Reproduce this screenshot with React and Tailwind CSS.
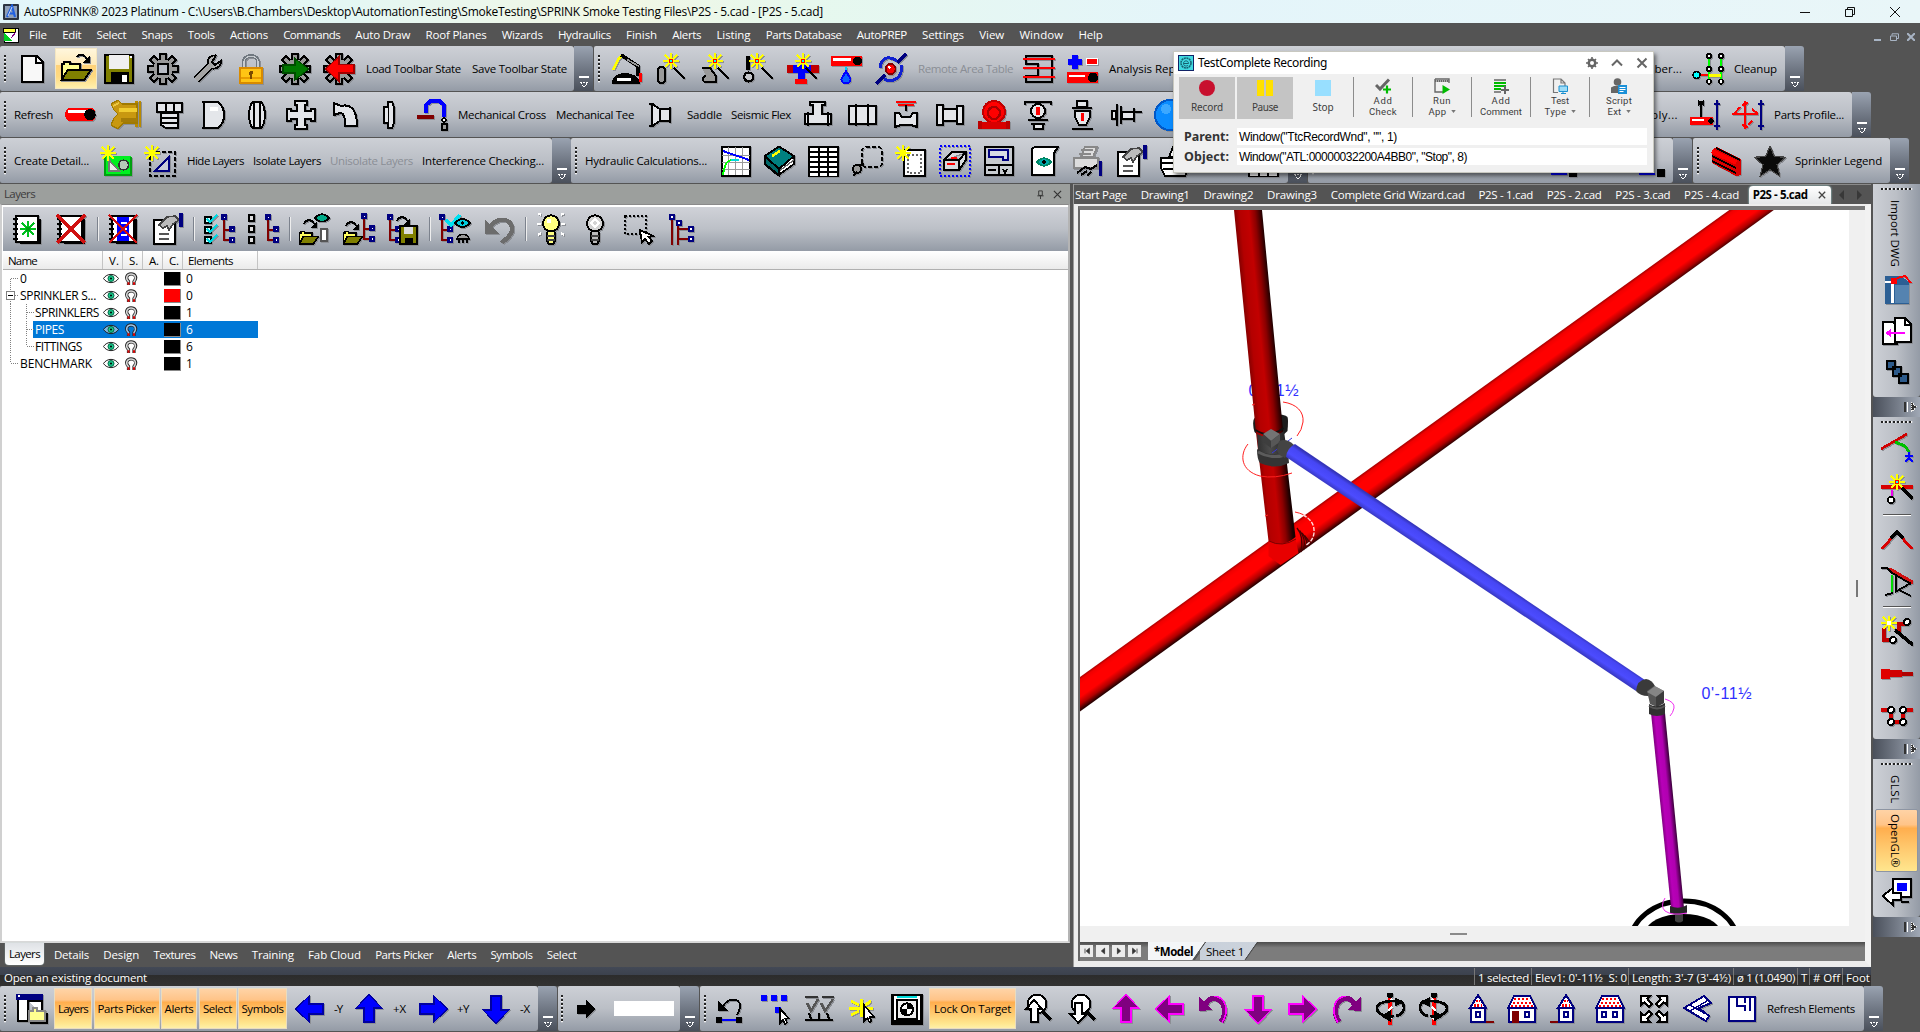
import React, { useLayoutEffect, useRef, useState } from "react";

const k = "#000", w = "#fff", r = "#f00", b = "#00f", n = "#000080", m = "#800000", y = "#ffff00", g = "#9a9a9a", ol = "#808000";

const p = (d, s = k, f = "none", sw = 1) => <path d={d} stroke={s} fill={f} strokeWidth={sw} />;
const c = (x, yy, rad, s = k, f = "none", sw = 1) => <circle cx={x} cy={yy} r={rad} stroke={s} fill={f} strokeWidth={sw} />;
const rc = (x, yy, ww, h, f = k) => <rect x={x} y={yy} width={ww} height={h} fill={f} />;

const spark = (x, yy, col = y, core = r) => (
  <g transform={`translate(${x} ${yy})`}>
    {p("M0-4V4M-4 0H4M-3-3L3 3M3-3L-3 3", col, "none", 0.9)}
    {rc(-1.2, -1.2, 2.4, 2.4, core)}
    {core === r && rc(-0.5, -0.5, 1, 1, "#0ff")}
  </g>
);
const gear = (
  <>
    {p("M8 0v16M0 8h16M2.2 2.2l11.6 11.6M13.8 2.2L2.2 13.8", k, "none", 3.6)}
    {c(8, 8, 5, k, g)}
    {p("M8 .8v14.4M.8 8h14.4M2.9 2.9l10.2 10.2M13.1 2.9L2.9 13.1", g, "none", 1.9)}
    {c(8, 8, 4.4, g, g)}
  </>
);
const wand = p("M9.5 7.5l5.5 5.5", k, "none", 1.4);
const tree = (x = 0, yy = 0) => (
  <g transform={`translate(${x} ${yy})`}>
    {p("M1.5 3v10.5h3M1.5 8.5h3", m)}
    {p("M.7 1.2h1.8v1.8H.7zM4.7 7.2h1.8V9H4.7zM4.7 12.5h1.8v1.8H4.7z", n, w, 1.1)}
  </g>
);
const book = (
  <>
    {p("M2.5 1.5h11v13h-11z", k, w)}
    {p("M4.5 15.2H14.6V3", k)}
    {p("M1 3h2.5M1 5.5h2.5M1 8h2.5M1 10.5h2.5M1 13h2.5", k)}
  </>
);
const folder = (x, yy) => (
  <g transform={`translate(${x} ${yy}) scale(.62)`}>
    {p("M.5 14V5.5h1v-1h3v1h6V9", k, "#ffff60", 1.4)}
    {p("M.5 14.5l3-6h12l-4 6z", k, ol, 1.4)}
  </g>
);
const hop = (x, yy) => <g transform={`translate(${x} ${yy})`}>{p("M0 2.5c1-2.5 4-2.5 5 0")}{p("M6.5 1v3.5H3.2z", "none", k)}</g>;
const house = (door, wide) => (
  <>
    {wide ? p("M1 7.5L4 1.5h8L15 7.5z", n, "#fff") : p("M4 7.5L8 1l4 6.5z", n, "#fff")}
    {wide ? <path d="M4 3h8M3.5 5h9M2.500 6.500h11" stroke={r} strokeDasharray="1 1" strokeWidth="1.200" /> : <path d="M7 4h2M6 6.200h4" stroke={r} strokeDasharray="1 .7" strokeWidth="1.200" />}
    {wide ? p("M1.5 7.5h13v7h-13z", n, w) : p("M4.5 7.5h7v7h-7z", n, w)}
    {wide ? p("M9.5 9.5h2v2.5h-2z", n, w) : p("M7 9.5h2v2.5H7z", n, w)}
    {door === "in" && rc(3, 9, 3.5, 6, m)}
    {door === "two" && p("M4 9.5h2v2.5H4z", n, w)}
    {door === "r" && rc(12, 13.8, 4, 1.4, m)}
    {door === "l" && rc(0, 13.8, 4, 1.4, m)}
  </>
);
const arrowU = (f, s) => p("M8 .8L14.5 7.5H10.5V14.5H5.5V7.5H1.5z", s, f, 0.6);
const rot = (deg, el) => <g transform={`rotate(${deg} 8 8)`}>{el}</g>;
const bend = (
  <>
    {p("M4.5 14.5C1 9.5 3 2.8 8.2 2.8 11 2.8 12 5 12.5 7", "#800080", "none", 2.6)}
    {p("M4 14.8C.2 9 2 1.6 8.2 1.6", "#f0f", "none", 0.8)}
    {p("M8.5 8.5l6.8.5V2z", "none", "#800080")}
  </>
);
const orbit = (
  <>
    {p("M8 0v16", r, "none", 2.4)}
    {p("M9 3L7 5M9 7L7 9M9 12l-2 2", w, "none", 1)}
    {c(8, 1, 1.6, "none", k)}
    {p("M14 4.5C7 3 1 5 1.5 8S7 12 10 11.5", k, "none", 1.4)}
    {p("M14 4.5c2 3 1 6-3 7", k, "none", 1.3)}
    {p("M10.5 2.5v4l4-2zM8 9v5l-4-2.5z", k, k, 0.5)}
  </>
);
const shade = "#e4e6ea";

const icons = {
  new: <>{p("M2.5 1.5h7.5l3 3v10H2.5z", k, "#f8f8f8")}{p("M9.5 1.5v3.5h3.5")}</>,
  open: <>{p("M1 14V5.5h1v-1h3v1h5V8", k, "#ffff90")}{p("M.8 13.5l3-5h11.7l-3.5 5z", k, ol)}{p("M8.5 2C10 0 12 .5 13.5 3")}{p("M15 1.2v3.6h-3.6z", "none", k)}</>,
  save: <>{p("M1 .8h14.2v14.4H1z", k, ol)}{rc(3.2, 1, 9.6, 7, "#f0f0f0")}{rc(4, 9.5, 9, 5.6, k)}{rc(9.6, 10.8, 2.2, 3.6, w)}{rc(13.3, 1.5, 1.2, 1.2, w)}</>,
  gear: <>{gear}{p("M5.5 5.5h5v5h-5z", k, "#b8bcc4")}</>,
  wrench: <>{p("M2.5 13.5L10 6", k, "none", 4)}{p("M12.5 1.2C8 1 8 5 9 7c2 1.5 6 1 6-3.2L12 6 10.5 4.5z", k, "#b0b0b0", 0.9)}{p("M2.7 13.3L10.5 5.5", "#a4a4a4", "none", 2.4)}</>,
  lock: <>{p("M4.5 8V4.5C4.5.5 11.5.5 11.5 4.5V8", "#707880", "none", 2)}{p("M4.5 8V4.5C4.5.8 11.5.8 11.5 4.5V8", "#c8ccd0", "none", 0.7)}{p("M2.5 7.5h11v7.7h-11z", "#d88a00", "#ffc414")}{rc(3, 12, 10, 1.2, "#e89c00")}{c(8, 10, 1, "none", "#7a4a00")}{rc(7.6, 10, 0.9, 3, "#7a4a00")}</>,
  gearR: <>{gear}{p("M2 6h6V2.8L14.8 8 8 13.5V10H2z", "#004c00", "#007800", 0.6)}</>,
  gearL: <>{gear}{p("M15.5 5.8H8V1.8L1.2 8 8 14.2V10h7.5z", "#a00000", r, 0.6)}</>,
  hand: <>{p("M1 8.5L4 2.5 5.5 1.5", y, "none", 1.3)}{p("M5 1l8.5 5.5v5", k, "none", 1.8)}{p("M8 3.2l6 3.5", g, "none", 0.8)}{p("M1 15c0-6 12-6 13 0z", k, k)}{p("M3 13.2h7", w, "none", 1.5)}{rc(14, 10, 1.4, 4.5, r)}</>,
  wandO: <>{p("M1.5 8.5c0-2 3.5-2 3.5 0v5c0 2-3.5 2-3.5 0z", k, g)}{spark(8, 4)}{wand}</>,
  wandP: <>{p("M1.5 7.5h4l3 4v3h-5c-2 0-2-3 0-3", k, g)}{spark(8, 4)}{wand}</>,
  wandH: <>{p("M2.5 1.5v7", k, "none", 1.6)}{c(2.8, 12, 2.2, k, "#c4c6ca", 1.2)}{spark(7, 4)}{wand}</>,
  wandT: <>{rc(0, 6, 16, 3.8, "#c00000")}{rc(3, 6, 9, 3.8, b)}{rc(5.5, 8, 3.5, 5.5, b)}{rc(4, 13.2, 6, 2.4, r)}{spark(8, 4)}{wand}</>,
  drop: <>{rc(0, 1.5, 15.5, 5, r)}{rc(1, 2.7, 9, 1.2, w)}{c(13.2, 4, 2, k, k, 0.5)}{p("M7.5 7v3", "#00d0ff")}{p("M7.5 9l2.3 4c0 3-4.6 3-4.6 0z", b, "#0a60ff")}</>,
  orbit: <>{p("M15.5.5L11 5M5 11L.5 15.5", n, "none", 1.8)}{p("M2.5 7.500C3 1.5 8 1.500 11 4M13 6c1.500 7-5 9-8.500 7", "#1020d0", "none", 1.5)}{c(7.8, 8, 2.5, m, r)}{c(7.2, 7.2, 0.6, "none", w)}</>,
  sheet: <>{p("M1.5 1.5h13v13h-13v-3h6v-6h-6z", k, "none", 1.1)}{p("M0 3h16M0 7.5h16M0 12h16", r, "none", 0.9)}</>,
  diff: <>{p("M4 1v7M.5 4.5h7", b, "none", 2.6)}{rc(9.5, 2.5, 6, 3.4, w)}{rc(10, 3, 5, 2.4, r)}{rc(0, 9.5, 15.5, 5.5, r)}{rc(1, 10.8, 8, 1.2, w)}{c(13, 12.3, 2.2, k, k, 0.5)}</>,
  clean: <>{p("M8.5 1v14M14.5 1v14", "#0f0", "none", 1)}{p("M4 11h4", r)}{p("M8.5 11.2h6", y, "none", 1.3)}{c(2.3, 11, 1.7, k, "#0ff", 0.8)}{[1.5, 8, 14.3].map((v) => <React.Fragment key={v}>{c(8.5, v, 1.1, k, w, 0.8)}{c(14.5, v, 1.1, k, w, 0.8)}</React.Fragment>)}</>,
  pipe: <>{p("M2 4.5h11c3 0 3 6.5 0 6.5H2c-2.5 0-2.5-6.5 0-6.5z", "none", r)}{rc(1.5, 5.5, 9, 1.3, w)}{c(12.5, 7.8, 2.6, k, k, 0.5)}</>,
  brass: <>{p("M13.500 1v13M15.500 1v13", "#b88a00", "none", 1.500)}{p("M14 2.500H6.500L4.500.5 1 2.500l1.500 3 2 2-2 2L1 13l3.500 2 2.500-3h7z", "#a07a00", "#c89810", 0.6)}{p("M5 5.500h9", "#f0cc30", "none", 2.200)}{p("M6 10.500h8", "#a47c08", "none", 1.600)}{p("M2 3.500l3-1.500", "#ecc840")}</>,
  cap: <>{p("M2 2h12.5v4.5H2z", k, shade)}{p("M4 7h8.5v7.5h-6L4 13z", k, shade)}{p("M4 9.5h8M4 12h8M6.5 2v4M10.5 2v4")}</>,
  plug: <>{p("M3.5 1.5v13M3.5 1.5h7c4 3 4 10 0 13h-7M2.5 1.5h2M2.5 14.5h2", k, shade)}{p("M6.5 5h4", w, "none", 1.6)}</>,
  ring: <>{p("M6 1.5h4c2.5 2 2.5 11 0 13H6C3.500 12.5 3.500 3.5 6 1.5z", k, shade)}{p("M6.300 2v12M9.300 2v12")}</>,
  cross: <>{p("M5 .8h6v2.4H9.8v3H12.8V5H15.2v6H12.8V9.8H9.8v3H11v2.4H5v-2.4h1.2v-3h-3V11H.8V5h2.4v1.2h3v-3H5z", k, shade)}</>,
  elbow: <>{p("M2.5 2v6l3-1c2 0 2.5 2 2.5 6.5h6C14 7 12 2 6 3.5z", k, shade)}</>,
  ring2: <>{p("M9.5 1.5c1.500 2 1.500 11 0 13h-2v-13z", k, shade)}{p("M7.5 4H5.5v8h2", k, shade)}</>,
  loop: <>{p("M4.5 7V3l2-1.8h5L13.5 3v6", b, "none", 2)}{rc(0, 8, 8.5, 2, m)}{c(13.5, 10.5, 1, k, w, 0.7)}{p("M12.5 12.5h2.5v3h-2.5z", k, g)}</>,
  bell: <>{p("M3.5 2.5v11l4-2.500h5V5h-5z", k, shade)}{p("M2 2.5h2.5M2 13.5h2.5M7.5 5v6M12.5 4v8")}</>,
  tee: <>{p("M1.5 7.5h4V3H4V1.5h7.500V3H10v4.5h4.500v5h-13z", k, shade)}{p("M3 6.500v7M13 6.500v7")}</>,
  coup: <>{p("M1.5 3.500h13.5v9H1.5z", k, shade)}{p("M5 2.500v11M11 2.500v11")}</>,
  valve: <>{p("M3 1.5h10M4 3h8", r, "none", 1)}{p("M8 3v3")}{p("M2.5 14V7h2l1.5 2h4l1.5-2h2v7l-3-1H5.5z", k, shade)}</>,
  nip: <>{p("M1.5 3h3v2h7V3.5h3v9h-3V11h-7v2h-3z", k, shade)}{p("M4.5 5v6M11.5 5v6")}</>,
  flange: <>{c(8, 6.5, 5.5, "#c00000", r)}{c(8, 7, 3, "#a80000", "none", 1.2)}{rc(1, 11.5, 14, 3.5, "#d80000")}{rc(0, 11, 2, 4, "#b00")}{rc(14, 11, 2, 4, "#b00")}</>,
  head: <>{p("M1 1.5h14M1.5 2v1M14.5 2v1")}{c(8, 6, 3.5, k, shade)}{p("M8 4v4", r, "none", 1.6)}{p("M3 10.5h10M4.5 12.5h7M6 12v3h4.5v-3", k, shade)}</>,
  head2: <>{p("M5.5 1h5v3h-5zM3 4.5h10", k, shade)}{p("M4.5 6h7.5v3L10 13H6.5L4.5 9z", k, shade)}{p("M8.2 7v4", r, "none", 1.5)}{p("M3 15h10.5")}</>,
  side: <>{p("M3.5 2.5v11M5.5 3.5v9", k)}{p("M1 6h2v4H1zM6 6.5h6v3.5H6z", k, shade)}{p("M12 6.500h4M12 4.5v7")}</>,
  ball: <>{c(8, 8, 7.5, "#0058c8", "#0a8cff", 1)}{c(6, 5, 2.5, "none", "#3ca8ff")}</>,
  align: <>{p("M6.5 1v12", k, "none", 1.2)}{p("M5 1l3 2M8 1L5 3")}{rc(1, 9, 11.5, 4.2, r)}{rc(2, 10, 6, 1, w)}{c(11.5, 11, 1.4, "none", k)}{p("M14.5 .5v15M13 2.5h3M13 13.5h3", n, "none", 1.1)}</>,
  redarr: <>{p("M6.5 1v14M0 7.5h13M4 4l-3 3.5M10 5l3 2.5M5 3l3-1M5 13l3 1M8 13l2-2", r, "none", 1)}{p("M14.5 .5v15M13 2.5h3M13 13.5h3", n, "none", 1.1)}</>,
  detail: <>{rc(2, 5.5, 13.5, 10, "#00f020")}{p("M2.5 6v9h13V6", "#00a010")}{p("M4.5 7.5v5.5h5z", "#777", "#eee", 0.8)}{c(11.8, 10, 2.4, "#333", "#b8c8b8", 0.8)}{spark(4, 4, y, y)}</>,
  area: <><path d="M3 3.5h12.5v12H3z" stroke={k} strokeDasharray="2 1" fill="none" />{p("M5.5 13L12.5 6v7z", n, "#c8ccd8")}{spark(4, 4, y, y)}</>,
  graph: <>{p("M1.5 1h14v14.5h-14z", k, w)}{p("M4.5 1v14M8 1v14M11.5 1v14M1.5 5h14M1.5 8.5h14M1.5 12h14", g, "none", 0.5)}{p("M2 3l13 4.5", b)}{p("M2 15c1-6 2-7 4-7.5", "#0f0")}{p("M6 7.5h4", "#0dd")}</>,
  book2: <>{p("M.8 5.500v4L7.500 15.200 15.500 9.500V5.500z", k, w, 0.9)}{p("M7.500 13.500l8-6", "#666", "none", 0.7)}{p("M.8 5.500L8 .8l7.500 4.700L8 12z", k, "#008080")}{p("M.8 5.500L8 12v3L.8 9.500z", k, "#006868")}{p("M4.500 5.500L8.5 3", y, "none", 1.3)}</>,
  table: <>{rc(.5, .5, 15.5, 15.5, k)}{[1.5, 4, 6.5, 9, 11.5, 14].map((v) => <React.Fragment key={v}>{rc(1.5, v, 3.8, 1.4, w)}{rc(6.3, v, 3.8, 1.4, w)}{rc(11, v, 4, 1.4, w)}</React.Fragment>)}</>,
  lasso: <><rect x="5.5" y="1" width="10" height="10" rx="2" fill="none" stroke={k} strokeDasharray="2 1" />{c(3, 12, 2, k, g)}{p("M4 10l2.5-.5M1 15.5l2-2")}</>,
  newdoc: <>{p("M4.5 2.5h10.5v13H4.5z", k, w)}<path d="M6.5 5h6.5v9H6.5z" stroke="#666" strokeDasharray="1 1" fill="none" strokeWidth=".8" />{spark(4, 4, y, y)}</>,
  box3: <><rect x=".5" y=".5" width="15" height="15" stroke={b} strokeDasharray="1 1" fill="none" />{p("M2.5 7.5l4-4h7v4l-3.5 5H2.5zM2.5 7.5h7.5l3.5-4M10 7.5v5", k, "#d8dade")}{p("M6 6.500h3", r)}{rc(4, 9, 4, 1.2, r)}</>,
  titleb: <>{p("M.8 .8h14.4v14.4H.8zM.8 10h14.4M8 10v5", k, "#c8ccd0")}{p("M3 2.5h9.5v5H10V6H3z", n, "#d8dce4")}{p("M2.5 12.5h4M10 12l1 2 1-2", k)}</>,
  roll: <>{p("M2.5 15V3c0-2 1-2 2-2h11l-2 3v11z", k, w)}{p("M5 8.5c2-2.5 5-2.5 7 0-2 2.5-5 2.5-7 0z", "#086", "#0aa", 0.9)}{c(8.5, 8.5, 0.9, "none", k)}</>,
  print: <>{p("M5 6L7 1h6l-2 5zM1.5 6.5h12v5h-12z", "#888", "#ddd")}{p("M5 2.5h6M4 4.5h6", "#888", "none", 0.7)}{p("M3 14l4-3 3 1 3-2M5 15l3-2M8 15.5l2-2", k)}{rc(14, 8, 1.6, 7.5, n)}</>,
  props: <>{p("M1.5 3.5h10.5v12H1.5z", k, w)}{p("M4 6l4-4 4-.5 2 2-3 2-2 3-1-2-2 1z", "#444", "#bbb", 0.8)}{rc(14.2, 0, 1.6, 7, n)}{p("M4 10.5h5M4 13h5", "#555", "none", 0.8)}</>,
  prn: <>{p("M5 6L7 1h7l-2 5zM1 6.5h14v5l-2 4H3l-2-4z", k, w)}{p("M1 9h14M2 12h12")}</>,
  beam: <>{p("M1 2.5L3.5 1 15.5 7v8L13 15.5 1 9z", "none", "#d80000")}{p("M1 5.5l12 6M3 1.5l12 6M1 8l12 6", k, "none", 1)}{p("M1 3l12 5.8", r, "none", 2.2)}</>,
  star: p("M8 .5l2.2 5.3 5.6.3-4.3 3.8 1.4 5.7L8 12.3l-4.9 3.3 1.4-5.7L.2 6.1l5.6-.3z", "#444", "#0a0a0a", 0.6),
  lnew: <>{book}{spark(8.5, 8, "#00c020", "#00a010")}</>,
  ldel: <>{book}{p("M1 1l14 14M15 1L1 15", "#d01010", "none", 1.5)}</>,
  lmv: <>{book}{rc(5, 2, 6, 12, b)}{p("M7 5h3M7 8h3M7 11h3", w, "none", 0.8)}{p("M1 1l14 14M15 1L1 15", "#d01010", "none", 1.3)}</>,
  ltree1: <>{p("M1 2h3v3H1zM1 7h3v3H1zM1 12h3v3H1z", k, "#cff")}{p("M2 3l1.5 1.5L7 1M2 8l1.5 1.5L7 6M2 13l1.5 1.5L7 11", "#00d8e0", "none", 1.1)}{tree(9, 0)}</>,
  ltree2: <>{p("M1 1h2.5v3H1zM1 6.5h2.5v3H1zM1 12h2.5v3H1z", k, "#ddd")}{tree(9, 0)}</>,
  lopen1: <>{folder(0, 6.5)}{hop(2.5, 3)}{p("M8 2.5c2-2.5 5-2.5 7 0-2 2.5-5 2.5-7 0z", k, "#0a8", 0.8)}{p("M11 8h3v6h-3z", "#555", w)}</>,
  lopen2: <>{folder(0, 6.5)}{hop(1.5, 4)}{tree(9, -.5)}</>,
  lsave: <>{tree(0, 0)}{hop(5, 1.5)}{p("M6.5 6.5h8.5v9H6.5z", k, ol)}{rc(8.5, 7, 4.5, 3.4, "#ddd")}{rc(9, 12.5, 4, 3, k)}</>,
  lchk: <>{tree(0, 0)}{p("M3.5 3.5L6 6l4.5-5", "#00e0f0", "none", 1.8)}{p("M8 5c2-2.500 5.500-2.500 7.500 0-2 2.500-5.500 2.500-7.500 0z", k, "#0cd")}{c(11.800, 5, .8, "none", k)}{p("M9 13c0-3 6-3 6 0zM10 13v2M14 13v2M12 13v2", k, g, 0.8)}</>,
  undo: <>{p("M3 8C6 1.5 15 2 14.5 8.5 14 12 11 13 9.5 15", "#6c6c6c", "none", 2.2)}{p("M1 3.5v7h7z", "none", "#6c6c6c")}</>,
  bulbOn: <>{p("M3 1L1.5 0M13 1l1.5-1M1 5.5H3M13 5.5h2M3 10l-1.5 1M13 10l1.5 1", w)}{c(8, 5.2, 4, k, "#ffff80")}{p("M6 9.5v4.5l1 1.5h2l1-1.5V9.5", k, "#ffff80")}{p("M6 11.5h4M6 13.5h4", "#444")}{c(7, 4, 1.2, "none", w)}</>,
  bulbOff: <>{c(8, 5.2, 4, k, "#d4d4d4")}{p("M6 9.5v4.5l1 1.5h2l1-1.5V9.5", k, "#bbb")}{p("M6 11.5h4M6 13.5h4", "#444")}{p("M6 5l2-2 2 2-2 2z", w, "none", 0.8)}</>,
  lsel: <><rect x="1" y="1.5" width="10.5" height="9" stroke={k} strokeDasharray="1 1" fill="none" />{p("M8.5 8.5l1 6 1.5-1.5 2 2.5 1.5-1.5-1.5-2 2-.5z", k, w, 0.9)}</>,
  lall: <>{p("M2.5 2v14M5.5 4v12M5.5 8h5M5.5 13h5", m)}{p("M1.5 1.2h1.8V3H1.5zM5 4h1.8v1.8H5zM11 7.2h1.8V9H11zM11 12.2h1.8V14H11z", n, w)}</>,
  wins: <>{p("M.8 3v11h5V3z", k, w)}{rc(0, .5, 13.5, 3, n)}{rc(1, 1.2, 1, 1, w)}{p("M6 4h7v7", k, w)}{p("M6.5 14V9h2V7.5h2V9h4v5z", "#888", "#ffff90", 0.8)}{p("M7 15.2h8.5V10", k)}</>,
  aL: rot(-90, arrowU("#00f", "#0000a0")), aU: arrowU("#00f", "#0000a0"), aR: rot(90, arrowU("#00f", "#0000a0")), aD: rot(180, arrowU("#00f", "#0000a0")),
  go: p("M3.5 6h4.5V3.5L12.5 8 8 12.5V10H3.5z", k, k, 0.5),
  lastv: <>{p("M4 6.5C7 2 12.5 2.5 12.5 6.5c0 2.5-1 3.5-1.5 4.5", k)}{p("M1.5 4v4.8h4.8z", "none", k)}{rc(.5, 12, 2.8, 3, k)}{rc(10.5, 12, 2.8, 3, k)}{p("M3.5 13.5h7", b)}</>,
  selb: <>{rc(1, 1, 3.2, 3.2, b)}{rc(6, 1, 3.2, 3.2, b)}{rc(11, 1, 3.2, 3.2, b)}{rc(8, 7, 3, 3, b)}{p("M10.5 8v7l1.5-1.5 1 2 1-.7-.8-2h2z", k, w, 0.8)}</>,
  chk2: <>{p("M1 2h6.5M9.5 2H15.500", "#333")}{p("M2 5l2 4L7.5 3M9 5l2 4 4-6", "#555", "none", 1.2)}{p("M1 13.5h14", k, "none", 1.2)}{p("M3 10l1 3M8 10v3M12 10l1 3")}</>,
  ypt: <>{p("M2 4l4 2M1 7.5h12M2 11l4-2M7 3v9M12 4L8 7M12 11L8 8", y, "none", 1.5)}{p("M8.5 6v8l1.7-1.6 1 2.3 1-.6-.9-2.1h2.2z", k, w, 0.8)}</>,
  target: <>{p("M.8 1h14.4v14.2H.8z", k, w, 1.2)}{rc(3, 1.5, 10, 1.2, "#0dd")}{p("M3 3.5h10V13H3z", k, "#eee")}{c(8, 8.2, 3, k, w)}{p("M8 5.2v3H11A3 3 0 0 0 8 5.2zM8 8.2v3A3 3 0 0 1 5 8.2z", "none", k)}{p("M1 14h14")}</>,
  zin: <>{c(7.5, 5.5, 4.7, k, w)}{p("M10.5 9.5l4 4", k, "none", 1.8)}{p("M6 3.5L10 8H8v6.5H4.5V8H2z", k, w)}</>,
  zout: <>{c(7.5, 5.5, 4.7, k, w)}{p("M10.5 9.5l4 4", k, "none", 1.8)}{p("M6.2 15L2 10.5h2.3V5h3.7v5.5h2.3z", k, w)}</>,
  pU: arrowU("#800080", "#f0f"), pL: rot(-90, arrowU("#800080", "#f0f")), pD: rot(180, arrowU("#800080", "#f0f")), pR: rot(90, arrowU("#800080", "#f0f")),
  bendL: <g transform="translate(16 0) scale(-1 1)">{bend}</g>, bendR: bend,
  orbL: orbit,
  orbR: <g transform="translate(16 0) scale(-1 1)">{orbit}</g>,
  h1: house("r", false), h2: house("in", true), h3: house("l", false), h4: house("two", true),
  fit: <>{[0, 90, 180, 270].map((a) => <g key={a} transform={`rotate(${a} 8 8)`}>{p("M1.5 1.5h4.5L4.7 3l2.3 2.6-1.6 1.5L3 4.7 1.5 6z", k, w, 1)}</g>)}</>,
  iso: <>{p("M1 7.5L11 1.5l1.5 1.5 2 2-6 2.5 5 4-1.5 2.5z", n, w)}{p("M4 9l8.5-5M8 7.5l6 4.5M4 6l7 4", n, "none", 0.7)}</>,
  plan: <>{p("M1.5 2h13v12h-13z", n, w, 1.1)}{p("M5.5 2v4.5h4V9M9.5 2v3M12 2v7", n)}</>,
  dwg: <>{p("M2 1.5h8l4 3v10.8H2z", "none", "#2c5f94")}{rc(7, 6, 7, 9, "#5583b0")}{p("M5.8 3v12M2 4.5h6", w, "none", 1.2)}{rc(5, 2.5, 3, 3.2, r)}{p("M8 2.5L12 1.5 15 5", r, "none", 1)}</>,
  copy: <>{p("M.8 3.5h5l2 2v9h-7z", k, w)}{p("M7 1.5h5l3 3v9H7z", k, w)}{p("M12 1.5V5h3")}{p("M3 9h9", "#f0f")}{p("M2 9l3-2v4z", "none", "#f0f")}</>,
  cubes: <>{p("M3 2h4v4H3zM6 5.2h4.2v4.2H6zM9 8.6h4.3v4.6H9z", k, "#2d5a8a", 1)}</>,
  r1: <>{p("M0 8.5L13 1", "#d00000", "none", 1.3)}{p("M7 5l5 2 2 3v1", "#00c000", "none", 1.4)}{p("M12 12h4M14 10v4M12 15l2-2 2 2", b)}</>,
  r2: <>{rc(0, 5.5, 16, 2, "#d80000")}{spark(8, 4)}{p("M5.5 8v3", "#e0e", "none", 1.3)}{c(5, 13, 1.6, k, w)}{p("M10.5 7l5.5 5.5", k, "none", 1.6)}</>,
  r3: <>{p("M.5 12.5L8 4l7.5 8.5", "#d80000", "none", 1.4)}{p("M5 7.2L8 3.8l3 3.4", k, "none", 1.7)}</>,
  r4: <>{p("M4 1.500l12 7", "#d01010", "none", 2)}{p("M0 1h3l3 3M4 2.500l11 6.500", k, "none", 0.9)}{p("M5.500 4.500v9", "#0d0", "none", 1.4)}{p("M7.500 5v8M7 13l8-4.500M2 14.500l4-1M9 12l6 3", k, "none", 0.9)}</>,
  r5: <>{p("M1.5 6v6h4M9 8V4h3", "#c00000", "none", 1.8)}{c(6, 12, 1.5, k, w)}{c(13, 3, 1.5, k, w)}{p("M7 7l9 7.5", k, "none", 1.8)}{spark(4, 3.5, y, w)}</>,
  r6: <>{p("M0 5.5h4.5v5H0z", "none", "#e00000")}{rc(4.5, 6.2, 6, 3.4, "#d00000")}{rc(10.5, 7.2, 5.5, 1.8, "#b00000")}</>,
  r7: <>{p("M0 5h5M11 5h5M5 5v6h6V5", "#d00000", "none", 1.6)}{c(5, 5, 1.5, k, w)}{c(11, 5, 1.5, k, w)}{c(5, 11, 1.5, k, w)}{c(11, 11, 1.5, k, w)}</>,
  back: <>{p("M6 1h9v9H6z", k, w, 1.2)}{rc(8, 3, 5, 4, b)}{p("M.8 9.5L6 5.5V8h4v3.5H6V14z", k, w)}{p("M10 12.5h4")}</>,
  net: <>{p("M2 14.5h8", b)}{rc(11, 12, 4, 4, k)}</>,
  blank: null,
};

function Icon({ i, className = "size-8" }) {
  return (
    <svg viewBox="0 0 16 16" shapeRendering="crispEdges" className={`${className} shrink-0 drop-shadow-[1px_1px_0_#8c8f95]`}>
      {icons[i]}
    </svg>
  );
}

/* Text whose letter spacing is tuned so that it fills a given width. */
function T({ w: width, className = "", children }) {
  const ref = useRef(null);
  const [ls, setLs] = useState(0);
  useLayoutEffect(() => {
    const natural = ref.current.getBoundingClientRect().width;
    setLs((width - natural) / String(children).length);
  }, [width, children]);
  return (
    <span ref={ref} className={`inline-block shrink-0 whitespace-nowrap ${className}`} style={{ letterSpacing: ls }}>
      {children}
    </span>
  );
}

const Cell = ({ i }) => <div className="flex w-11 shrink-0 items-center justify-center"><Icon i={i} /></div>;
const Cells = ({ list }) => list.split(" ").map((i, x) => <Cell key={x} i={i} />);
const Label = ({ w: width, dim, pad = "pl-[5px] pr-1", children }) => (
  <div className={`flex shrink-0 items-center ${pad} ${dim ? "text-[#8a8e95]" : "text-black"}`}><T w={width}>{children}</T></div>
);
const Grip = ({ className = "w-[11px] pl-1" }) => (
  <div className={`flex shrink-0 items-center ${className}`}>
    <div className="h-7 w-[2px] bg-[repeating-linear-gradient(#222_0_2px,#f4f4f4_2px_3px,#b8bcc4_3px_4px)]" />
  </div>
);
const Bar = ({ className = "", children }) => (
  <div className={`flex h-[45px] min-w-0 ${className}`}>
    <div className="flex min-w-0 flex-1 items-stretch overflow-hidden rounded-r-[3px] rounded-l-[2px] bg-linear-to-b from-[#cdd0d6] via-[#bbbfc6] to-[#949ba6]">{children}</div>
    <div className="flex w-[19px] shrink-0 flex-col items-center justify-end rounded-tr-[3px] bg-linear-to-b from-[#9aa3b1] to-[#4a505b] pb-[2px]">
      <svg viewBox="0 0 12 14" className="h-[14px] w-3" shapeRendering="crispEdges">
        <path d="M1 1.5h10" stroke="#fff" strokeWidth="2" />
        <path d="M2 7h8l-4 5z" fill="#555b66" stroke="#fff" strokeDasharray="2 1" />
      </svg>
    </div>
  </div>
);
const Toggle = ({ w: width, tw, children }) => (
  <div className={`my-[2px] flex shrink-0 items-center justify-center border border-[#e9dcc0] bg-[linear-gradient(#ffd3a6,#ffc488_28%,#ffae4e_34%,#ffc76c_60%,#ffe68e_88%,#fff0a8)] text-black ${width}`}><T w={tw}>{children}</T></div>
);

const menus = [["File", 18], ["Edit", 19], ["Select", 30], ["Snaps", 31], ["Tools", 27], ["Actions", 38], ["Commands", 57], ["Auto Draw", 55], ["Roof Planes", 61], ["Wizards", 41], ["Hydraulics", 53], ["Finish", 31], ["Alerts", 29], ["Listing", 34], ["Parts Database", 76], ["AutoPREP", 50], ["Settings", 42], ["View", 25], ["Window", 44], ["Help", 24]];

function TopBars() {
  return (
    <div className="flex h-[138px] shrink-0 flex-col gap-px">
      <div className="flex w-[1804px]">
        <Bar className="w-[594px] pr-px">
          <Grip />
          <Cell i="new" />
          <div className="my-[2px] flex w-[42px] shrink-0 items-center justify-center border border-[#f3e6c2] bg-[linear-gradient(#fff6dc,#ffeab8_40%,#ffd27a_42%,#ffda80_70%,#fff0ae)]"><Icon i="open" /></div>
          <Cells list="save gear wrench lock gearR gearL" />
          <Label w={95} pad="pl-[5px] pr-[6px]">Load Toolbar State</Label>
          <Label w={95}>Save Toolbar State</Label>
        </Bar>
        <Bar className="flex-1">
          <Grip />
          <Cells list="hand wandO wandP wandH wandT drop orbit" />
          <Label w={95} dim>Remote Area Table</Label>
          <Cells list="sheet diff" />
          <Label w={82} pad="pl-1 pr-2">Analysis Report</Label>
          <div className="flex-1" />
          <Label w={66}>Renumber...</Label>
          <Cell i="clean" />
          <Label w={43} pad="pl-1 pr-2">Cleanup</Label>
        </Bar>
      </div>
      <Bar className="w-[1871px]">
        <Grip />
        <Label w={39} pad="pl-[3px] pr-[6px]">Refresh</Label>
        <Cells list="pipe brass cap plug ring cross elbow ring2 loop" />
        <Label w={88} pad="pl-[3px] pr-[6px]">Mechanical Cross</Label>
        <Label w={78} pad="pl-1 pr-[5px]">Mechanical Tee</Label>
        <Cell i="bell" />
        <Label w={35} pad="pl-1 pr-[5px]">Saddle</Label>
        <Label w={60} pad="pl-1 pr-[5px]">Seismic Flex</Label>
        <Cells list="tee coup valve nip flange head head2 side ball" />
        <div className="flex-1" />
        <Label w={64}>Assembly...</Label>
        <Cells list="align redarr" />
        <Label w={70} pad="pl-1 pr-2">Parts Profile...</Label>
      </Bar>
      <div className="flex w-[1909px]">
        <Bar className="w-[571px]">
          <Grip />
          <Label w={75} pad="pl-[3px] pr-[5px]">Create Detail...</Label>
          <Cells list="detail area" />
          <Label w={57}>Hide Layers</Label>
          <Label w={68}>Isolate Layers</Label>
          <Label w={83} dim>Unisolate Layers</Label>
          <Label w={122}>Interference Checking...</Label>
        </Bar>
        <Bar className="w-[737px] pr-px">
          <Grip />
          <Label w={122} pad="pl-[3px] pr-[6px]">Hydraulic Calculations...</Label>
          <Cells list="graph book2 table lasso newdoc box3 titleb roll print props prn blank table" />
        </Bar>
        <Bar className="w-[385px] pr-px">
          <Grip />
          <Cells list="r7" />
          <div className="flex-1" />
          <Cells list="net blank net" />
        </Bar>
        <Bar className="flex-1">
          <Grip />
          <Cells list="beam star" />
          <Label w={87} pad="pl-[3px] pr-2">Sprinkler Legend</Label>
        </Bar>
      </div>
    </div>
  );
}

const rowsData = [
  ["0", 0, "#000", "0", 6], ["SPRINKLER S...", 0, "#f00", "0", 76], ["SPRINKLERS", 1, "#000", "1", 64],
  ["PIPES", 1, "#000", "6", 29], ["FITTINGS", 1, "#000", "6", 47], ["BENCHMARK", 0, "#000", "1", 72],
];
const treeLines = ["M7.5 9v8M8 8.5h7", "M7.5 0v17M12 8.5h4", "M7.5 0v17M22.5 0v17M23 8.5h7", "M7.5 0v17M22.5 0v17M23 8.5h7", "M7.5 0v17M22.5 0v8M23 8.5h7", "M7.5 0v8M8 8.5h7"];

function LayersPanel() {
  const sep = <div className="flex w-2 shrink-0 justify-center py-2.5"><div className="w-px bg-[#7c828d] shadow-[1px_0_0_#eee]" /></div>;
  return (
    <div className="flex w-[1070px] shrink-0 flex-col">
      <div className="flex h-5 items-center justify-between bg-[#9c9f9d] pr-2 pl-1 text-[#3c3c3c]">
        <T w={31}>Layers</T>
        <div className="flex gap-2">
          <svg viewBox="0 0 10 10" className="size-[9px]"><path d="M3 1h4v5H3zM1.500 6.500h7M5 6.500V10" fill="none" stroke="#333" /></svg>
          <svg viewBox="0 0 10 10" className="size-[9px]"><path d="M1 1l8 8M9 1L1 9" stroke="#333" strokeWidth="1.300" /></svg>
        </div>
      </div>
      <div className="flex h-[739px] flex-col border-t border-r-2 border-b-2 border-l-2 border-t-[#8a8a8a] border-r-[#b4b4b4] border-b-[#d8d8d8] border-l-[#d0d0d0] bg-white pt-[2px] pl-px">
        <div className="flex h-11 shrink-0 bg-linear-to-b from-[#d0d2d8] via-[#bcc0c7] to-[#949ba6] pl-[2px]">
          <Cells list="lnew ldel" />{sep}<Cells list="lmv props" />{sep}<Cells list="ltree1 ltree2" />{sep}
          <Cells list="lopen1 lopen2 lsave" />{sep}<Cells list="lchk undo" />{sep}<Cells list="bulbOn bulbOff lsel lall" />
        </div>
        <div className="flex h-[19px] shrink-0 items-center border-b border-[#b0b0b0] bg-linear-to-b from-white to-[#ebebeb] text-black">
          {[["Name", 29, "w-[100px] pl-[5px]"], ["V.", 10, "w-5 pl-1.5"], ["S.", 9, "w-5 pl-1.5"], ["A.", 10, "w-5 pl-1.5"], ["C.", 10, "w-5 pl-1.5"], ["Elements", 45, "w-[75px] pl-[5px]"]].map(([t, tw, cl]) => (
            <div key={t} className={`h-full shrink-0 border-r border-[#c4c4c4] leading-[20px] ${cl}`}><T w={tw}>{t}</T></div>
          ))}
        </div>
        <div className="w-[255px]">
          {rowsData.map(([name, lvl, col, count, tw], idx) => {
            const sel = name === "PIPES";
            return (
              <div key={name} className={`grid h-[17px] grid-cols-[100px_20px_20px_20px_20px_75px] items-center text-[12px] leading-[17px] ${sel ? "bg-[linear-gradient(90deg,#fff_30px,#0078d7_30px)] text-white" : "text-black"}`}>
                <div className="flex items-center">
                  <svg viewBox="0 0 31 17" className={lvl ? "h-[17px] w-8 shrink-0" : "h-[17px] w-[17px] shrink-0"} preserveAspectRatio="xMinYMin slice" shapeRendering="crispEdges">
                    <path d={treeLines[idx]} stroke="#808080" strokeDasharray="1 1" />
                    {idx === 1 && <><rect x="3.500" y="4.500" width="8" height="8" fill="#fff" stroke="#808080" /><path d="M5 8.500h5" stroke="#000" /></>}
                  </svg>
                  <T w={tw}>{name}</T>
                </div>
                <svg viewBox="0 0 16 10" className="h-[11px] w-4"><path d="M.5 5C4-.5 12-.5 15.500 5 12 10.500 4 10.500.5 5z" fill={sel ? "#7fb4e0" : "#fff"} stroke="#222" /><circle cx="8" cy="5" r="3" fill="#19c98a" stroke="#064" /><circle cx="8" cy="5" r="1" /></svg>
                <svg viewBox="0 0 14 14" className="ml-px h-[14px] w-[14px]"><path d="M4.500 13V9.500C1 6 3 1.800 7 1.800s6.500 3.700 3 7.700V13" fill="none" stroke="#222" strokeWidth="3.200" /><path d="M4.500 12.500V9.500C1 6 3 2 7 2s6 3.500 3 7.500v3" fill="none" stroke={sel ? "#9cc4e8" : "#d8d8d8"} strokeWidth="1.500" /><path d="M3.500 11.500h2M9 11.500h2" stroke="#d00" strokeWidth="2.400" /></svg>
                <span />
                <div className="ml-px h-[14px] w-[17px] border-r border-b border-[#888]"><div className={`h-full w-full ${col === "#000" ? "bg-black" : "bg-[#f00]"}`} /></div>
                <span className="pl-[3px] tracking-tight">{count}</span>
              </div>
            );
          })}
        </div>
      </div>
      <div className="flex h-6 items-start pl-[5px] text-white">
        <div className="mr-[10px] flex h-[22px] w-[39px] items-center justify-center rounded-b-[4px] bg-linear-to-b from-[#dfe2e6] to-white text-black shadow-[0_0_1px_#cff]"><T w={31}>Layers</T></div>
        <div className="flex gap-[14.200px] pt-1">
          {[["Details", 35], ["Design", 36], ["Textures", 42], ["News", 28], ["Training", 42], ["Fab Cloud", 53], ["Parts Picker", 58], ["Alerts", 29], ["Symbols", 42], ["Select", 30]].map(([t, tw]) => <T key={t} w={tw}>{t}</T>)}
        </div>
      </div>
    </div>
  );
}

function Model() {
  const G = ({ id, pts, stops }) => (
    <linearGradient id={id} gradientUnits="userSpaceOnUse" x1={pts[0]} y1={pts[1]} x2={pts[2]} y2={pts[3]}>
      {stops.map(([o, col]) => <stop key={o} offset={o} stopColor={col} />)}
    </linearGradient>
  );
  return (
    <svg viewBox="1080 210 769 716" className="h-[716px] w-[769px] bg-white">
      <defs>
        <G id="main" pts={[1430, 425, 1446.1, 447.4]} stops={[[0, "#a00000"], [0.1, "#f00000"], [0.25, "#ff0000"], [0.6, "#ff0000"], [0.82, "#b00000"], [1, "#2a0000"]]} />
        <G id="riser" pts={[1255.7, 430, 1283, 427.400]} stops={[[0, "#8a0000"], [0.18, "#b40000"], [0.5, "#c20000"], [0.72, "#8c0000"], [1, "#1a0000"]]} />
        <G id="blue" pts={[1445, 545.5, 1436, 559]} stops={[[0, "#3434b8"], [0.2, "#4646f4"], [0.6, "#4c4cff"], [1, "#3232b0"]]} />
        <G id="drop" pts={[1661, 811, 1675, 809.6]} stops={[[0, "#820082"], [0.25, "#b800b8"], [0.6, "#b000b0"], [1, "#2c002c"]]} />
        <G id="gray" pts={[1255, 440, 1290, 437]} stops={[[0, "#2c2c2c"], [0.4, "#4c4c4c"], [1, "#181818"]]} />
      </defs>
      <g fontFamily="Liberation Sans, sans-serif" fontSize="16" fill="#3030ff">
        <text x="1248.500" y="396" textLength="50">0'-11½</text>
        <text x="1701.500" y="699" textLength="50">0'-11½</text>
      </g>
      <path d="M1080 677L1430 425 1730 209.500H1774.500L1430 459 1080 711.500z" fill="url(#main)" />
      <path d="M1253.500 420q2-6 17-6t17 3q1 2 0 14-7 8-17 8t-16-7q-2-6-1-12z" fill="#1c1c1c" />
      <path d="M1234 210L1255.700 430 1268.500 541Q1282 549 1295.500 537L1283 430 1262 210z" fill="url(#riser)" />
      <path d="M1268.500 541q13 8 27-2l3 14-18 12-12-9z" fill="#e80000" />
      <path d="M1269 541q13 7 27-2" fill="none" stroke="#7a0000" />
      {[0, 2.500, 5, 7.500].map((o) => <path key={o} d={`M${1297 + o} ${528 + o}q7 8 4 ${24 - o * 1.8}`} fill="none" stroke="#4a0000" strokeWidth="1.400" />)}
      <g fill="none" strokeWidth="1">
        <path d="M1252 405l3-1M1283 402c14 2 21 10 20 20q-1 8-6 14M1248 444c-9 11-7 27 12 32q15 3 32-3M1265 516l3-1M1295 512q10 2 14 7" stroke="#ff2020" />
        <path d="M1303 515q12 6 11 18-1 8-8 12" stroke="#ffd8d8" strokeWidth="1.400" strokeDasharray="4 1.500" />
      </g>
      <path d="M1257 434q13 7 27-3l4 29h-29z" fill="url(#gray)" />
      <path d="M1255.500 430q14 9 28-2" fill="none" stroke="#111" strokeWidth="2" />
      <path d="M1257 449q12 9 31 3l1 11q-14 7-29 0-3-4-3-14z" fill="#343434" />
      <path d="M1258 452q14 8 30 2" fill="none" stroke="#5c5c5c" strokeWidth="3" />
      <path d="M1263 434l8-5 9 5-9 7z" fill="#747474" />
      <path d="M1263 434l8 7v7l-8-6z" fill="#3e3e3e" /><path d="M1280 434l-9 7v7l9-6z" fill="#575757" />
      <path d="M1272 453l20-15" stroke="#3838e0" /><path d="M1279 441q8-3 15 4l-9 13q-9-4-8-9z" fill="#444" />
      <path d="M1295 444L1645 680 1636 691 1286 457q1-9 9-13z" fill="url(#blue)" />
      <ellipse cx="1684" cy="944" rx="54" ry="43" fill="none" stroke="#000" strokeWidth="5" />
      <ellipse cx="1683" cy="932" rx="37" ry="18" />
      <path d="M1651 713L1665 713 1684 908Q1677 912 1671 908z" fill="url(#drop)" />
      <path d="M1636 691q1-11 10-12 6 1 9 7l-7 10q-8 0-12-5z" fill="#3a3a3a" />
      <path d="M1647 691l7-5 10 5v12l-7 4-7-3z" fill="#565656" /><path d="M1647 692l8-6 9 5-8 6z" fill="#858585" /><path d="M1656 697l8-6v12l-8 4z" fill="#3c3c3c" />
      <path d="M1649 704q8 5 16-1v11q-8 4-16 0z" fill="#303030" /><path d="M1649 706q8 5 16 0" fill="none" stroke="#555" strokeWidth="2" />
      <path d="M1670 906q9 4 17-1v8q-8 3-17 0z" fill="#262626" /><path d="M1675 914h8v7q-4 3-8 0z" fill="#404040" />
      <path d="M1665 699q10 3 9 9-1 5-4 8M1665 898q-5 8 0 13 7 5 22 2" fill="none" stroke="#f030f0" />
    </svg>
  );
}

function DocPanel() {
  return (
    <div className="ml-[3px] flex w-[798px] shrink-0 flex-col border-l border-[#9a9a9a]">
      <div className="flex h-5 shrink-0 items-center gap-[13.700px] border-t border-[#8a8a8a] pl-px text-white">
        {[["Start Page", 52], ["Drawing1", 49], ["Drawing2", 50], ["Drawing3", 50], ["Complete Grid Wizard.cad", 134], ["P2S - 1.cad", 54.5], ["P2S - 2.cad", 55], ["P2S - 3.cad", 55], ["P2S - 4.cad", 55]].map(([t, tw]) => <T key={t} w={tw}>{t}</T>)}
        <div className="-ml-[4px] flex h-[18px] w-[82px] items-center gap-2.5 self-end rounded-t-[4px] bg-linear-to-b from-white to-[#e4e6e8] pl-1 font-bold text-black shadow-[0_0_2px_#bff]">
          <T w={55}>P2S - 5.cad</T>
          <svg viewBox="0 0 10 10" className="size-[8px]"><path d="M1 1l8 8M9 1L1 9" stroke="#444" strokeWidth="1.600" /></svg>
        </div>
        <svg viewBox="0 0 24 10" className="-ml-[5px] h-[10px] w-6"><path d="M5 0v10L0 5zM18 0v10l5-5z" fill="#383838" /></svg>
      </div>
      <div className="flex flex-1 flex-col border-2 border-r-[6px] border-b-[6px] border-l-4 border-[#ececec] border-r-[#f2f2f2] shadow-[inset_0_0_0_1px_#8a8a8a]">
        <div className="flex flex-1 flex-col border-t-4 border-l-2 border-t-[#777] border-l-[#666] bg-[#f0f0f0]">
          <div className="flex">
            <Model />
            <div className="flex flex-1 items-center justify-center"><div className="mt-10 h-[17px] w-[2px] bg-[#777]" /></div>
          </div>
          <div className="flex h-4 items-center justify-start pl-[370px]"><div className="h-[2px] w-[17px] bg-[#8a8a8a]" /></div>
          <div className="flex flex-1 items-start gap-[3px] bg-linear-to-b from-[#4c4c4c] to-[#7c7c7c] to-30% text-black">
            {["M2.500 2v6M8 1.500L4 5l4 3.500z", "M7 1.500L3 5l4 3.500z", "M3 1.500L7 5 3 8.500z", "M2 1.500L6 5 2 8.500zM7.500 2v6"].map((d) => (
              <div key={d} className="mt-[3px] flex h-3 w-[13px] items-center justify-center bg-[#ececec]"><svg viewBox="0 0 10 10" className="size-2"><path d={d} fill="#333" stroke="#333" /></svg></div>
            ))}
            <div className="ml-1 flex h-[18px]">
              <div className="flex w-[58px] items-center bg-[linear-gradient(125deg,#f4f6f8_80%,#555_81%,#555_84%,transparent_85%)] pt-px pl-1.5 font-bold"><T w={39}>*Model</T></div>
              <div className="-ml-[6px] flex w-[60px] items-center bg-[linear-gradient(125deg,transparent_8%,#c8d0da_9%,#ccd3dc_78%,#444_79%,transparent_81%)] pt-px pl-[6px]"><T w={38}>Sheet 1</T></div>
            </div>
          </div>
        </div>
      </div>
    </div>
  );
}

const VGroup = ({ className, children }) => (
  <div className={`flex shrink-0 flex-col ${className}`}>
    <div className="flex min-h-0 flex-1 flex-col items-center rounded-b-[3px] bg-linear-to-r from-[#cdd0d6] via-[#bbbfc6] to-[#949ba6]">
      <div className="my-1 h-[2px] w-8 shrink-0 bg-[repeating-linear-gradient(90deg,#222_0_2px,#f4f4f4_2px_3px,#b8bcc4_3px_4px)]" />
      {children}
    </div>
    <div className="flex h-5 shrink-0 items-center justify-end bg-linear-to-r from-[#4a505b] to-[#a0a8b5] pr-[3px]">
      <svg viewBox="0 0 14 12" className="h-3 w-[14px]" shapeRendering="crispEdges"><path d="M2 1v10" stroke="#333" strokeWidth="2" /><path d="M4 1v10" stroke="#fff" /><path d="M8 1v10l6-5z" fill="#333" stroke="#eee" strokeDasharray="1 1" /></svg>
    </div>
  </div>
);
const VCell = ({ i }) => <div className="flex h-[42px] shrink-0 items-center justify-center"><Icon i={i} /></div>;
const VSep = () => <div className="my-[3px] h-[2px] w-7 shrink-0 border-t border-[#555] bg-white" />;

function Sidebar() {
  return (
    <div className="ml-[2px] flex flex-1 flex-col">
      <VGroup className="h-[233px]">
        <div className="flex h-[74px] shrink-0 items-center justify-center pt-1 pr-1 [writing-mode:vertical-rl]"><span className="text-[11.500px] text-black">Import DWG</span></div>
        <VCell i="dwg" /><VCell i="copy" /><VCell i="cubes" />
      </VGroup>
      <VGroup className="h-[342px]">
        <VCell i="r1" /><VCell i="r2" /><VSep /><VCell i="r3" /><VCell i="r4" /><VSep /><VCell i="r5" /><VCell i="r6" /><VCell i="r7" />
      </VGroup>
      <VGroup className="h-[178px]">
        <div className="flex h-10 shrink-0 items-center justify-center pr-1 [writing-mode:vertical-rl]"><span className="text-[11.500px] tracking-[0.500px] text-black">GLSL</span></div>
        <div className="flex h-[63px] w-[43px] shrink-0 items-center justify-center rounded-xs border border-[#8d95a3] bg-[linear-gradient(#ffd3a6,#ffc488_24%,#ffae4e_30%,#ffc76c_60%,#ffe68e)] pr-1 [text-orientation:sideways] [writing-mode:vertical-rl]"><span className="text-[11.500px] text-black">OpenGL®</span></div>
        <VCell i="back" />
      </VGroup>
    </div>
  );
}

function StatusBar() {
  return (
    <div className="flex h-[19px] w-[1871px] shrink-0 items-center justify-between bg-[linear-gradient(#434956,#3c424e_40%,#2c2c2c_42%,#323232)] pl-1 text-white">
      <T w={143} className="pt-[3px]">Open an existing document</T>
      <div className="flex h-full items-center">
        {[["1 selected", 51, "w-[57px]"], ["Elev1: 0'-11½  S: 0", 92, "w-[97px]"], ["Length: 3'-7 (3'-4½)", 99, "w-[105px]"], ["ø 1 (1.0490)", 58, "w-[64px]"], ["T", 6, "w-3"], ["# Off", 27, "w-[33px]"], ["Foot", 24, "w-[29px]"]].map(([t, tw, cl]) => (
          <div key={t} className={`flex h-[17px] items-center border-l border-[#777] pt-[2px] pl-[3px] ${cl}`}><T w={tw} className="whitespace-pre">{t}</T></div>
        ))}
      </div>
    </div>
  );
}

function BottomBar() {
  const ax = (t, tw) => <Label w={tw} pad="pl-[2px] pr-[5px]">{t}</Label>;
  return (
    <div className="flex h-[46px] w-[1883px] shrink-0 items-start">
      <Bar className="w-[558px] pr-px">
        <Grip className="w-[10px] pl-1" />
        <Cell i="wins" />
        <div className="mr-px flex gap-[1.500px]">
          <Toggle w="w-[38px]" tw={30}>Layers</Toggle><Toggle w="w-[66px]" tw={58}>Parts Picker</Toggle><Toggle w="w-[36px]" tw={29}>Alerts</Toggle><Toggle w="w-[38px]" tw={29}>Select</Toggle><Toggle w="w-[49px]" tw={42}>Symbols</Toggle>
        </div>
        <Cell i="aL" />{ax("-Y", 8)}<Cell i="aU" />{ax("+X", 13)}<Cell i="aR" />{ax("+Y", 12)}<Cell i="aD" />{ax("-X", 10)}
      </Bar>
      <Bar className="w-[142px] pr-px">
        <Grip className="w-[6px] pl-[3px]" />
        <Cell i="go" />
        <div className="ml-1.5 h-[15px] w-[60px] self-center bg-white" />
      </Bar>
      <Bar className="flex-1">
        <Grip className="w-[9px] pl-1" />
        <Cells list="lastv selb chk2 ypt target" />
        <Toggle w="w-[87px]" tw={77}>Lock On Target</Toggle>
        <Cells list="zin zout pU pL bendL pD pR bendR orbL orbR h1 h2 h3 h4 fit iso plan" />
        <Label w={88} pad="pl-[3px] pr-[5px]">Refresh Elements</Label>
      </Bar>
    </div>
  );
}

function Recorder() {
  const tool = ([name, w1], [sub, w2], icon, drop) => (
    <div className="flex h-10 w-[59px] flex-col items-center border-l border-[#8c8c8c] pt-px font-[Roboto,sans-serif] text-[9.500px] leading-[11px] text-[#3c3c3c]">
      <svg viewBox="0 0 16 16" className="size-4 shrink-0">{icon}</svg>
      <T w={w1} className="mt-px">{name}</T>
      <div className="flex items-center"><T w={w2}>{sub}</T>{drop && <svg viewBox="0 0 6 4" className="ml-1 h-[3px] w-[5px]"><path d="M0 0h6L3 4z" fill="#777" /></svg>}</div>
    </div>
  );
  return (
    <div className="absolute top-[51px] left-[1173px] flex h-[122px] w-[481px] flex-col border border-[#c8c8c0] bg-[#f0f0f0] font-['Noto_Sans',sans-serif] shadow-[2px_3px_4px_rgba(0,0,0,.5)]">
      <div className="flex h-[22px] shrink-0 items-center bg-white pb-px pl-1">
        <svg viewBox="0 0 16 16" className="size-4"><rect x=".5" y=".5" width="15" height="15" fill="#40d8e0" stroke="#126" /><circle cx="8" cy="8" r="5" fill="none" stroke="#146070" strokeWidth="1.500" strokeDasharray="2 .6" /><path d="M5.500 8.500h5c0-3.500-5-3.500-5 0 0 3 4 3 4.500 1.500" fill="none" stroke="#146070" /></svg>
        <T w={129} className="ml-1 text-[12px] text-black">TestComplete Recording</T>
        <div className="ml-auto flex items-center gap-[13px] pt-px pr-[5px]">
          <svg viewBox="0 0 12 12" className="size-3"><circle cx="6" cy="6" r="3.300" fill="none" stroke="#666" strokeWidth="2.400" /><path d="M6 0v12M0 6h12M2 2l8 8M10 2l-8 8" stroke="#666" strokeWidth="1.600" /><circle cx="6" cy="6" r="2" fill="#fff" /></svg>
          <svg viewBox="0 0 12 12" className="size-3"><path d="M1 8.500l5-5 5 5" fill="none" stroke="#666" strokeWidth="2" /></svg>
          <svg viewBox="0 0 12 12" className="size-3"><path d="M1.500 1.500l9 9M10.500 1.500l-9 9" stroke="#666" strokeWidth="2" /></svg>
        </div>
      </div>
      <div className="flex gap-[2px] pt-[3px] pl-[5px] text-[10px] text-[#3c3c3c]">
        <div className="flex h-[42px] w-14 flex-col items-center bg-[#c4c4c4] pt-[3px]"><div className="size-4 rounded-full bg-[#c8102e]" /><T w={32} className="mt-[3px]">Record</T></div>
        <div className="flex h-[42px] w-14 flex-col items-center bg-[#c4c4c4] pt-[3px]"><div className="flex h-4 gap-[2px]"><div className="w-[7px] bg-[#ffe000]" /><div className="w-[7px] bg-[#ffe000]" /></div><T w={26} className="mt-[3px]">Pause</T></div>
        <div className="flex h-[42px] w-14 flex-col items-center pt-[3px]"><div className="size-4 bg-[#98dfff]" /><T w={21} className="mt-[3px]">Stop</T></div>
        <div className="flex">
          {tool(["Add", 19], ["Check", 28], <><path d="M1 7l4 4L14 1.500" fill="none" stroke="#666" strokeWidth="3" /><path d="M12 7.500v8M8 11.500h8" stroke="#0b0" strokeWidth="2.200" /></>)}
          {tool(["Run", 18], ["App", 18], <><path d="M1 1h14v4M1 1v13h8" fill="none" stroke="#666" strokeWidth="1.400" /><path d="M1 3h14" stroke="#666" strokeWidth="2" strokeDasharray="1.500 .5" /><path d="M8.500 7v9l7.500-4.500z" fill="#0b0" /></>, true)}
          {tool(["Add", 19], ["Comment", 42], <><path d="M1 2h12M1 14h7" stroke="#666" strokeWidth="1.600" /><path d="M1 5h12M1 8h12M1 11h7" stroke="#0b0" strokeWidth="1.900" /><path d="M12 8v8M8 12h8" stroke="#666" strokeWidth="2" /></>)}
          {tool(["Test", 18], ["Type", 22], <><path d="M6 14.500H1.500V1H9l4 4v3M9 1v4h4" fill="none" stroke="#777" strokeWidth="1.200" /><path d="M7 8h8.500v5.500H7zM9 15.500h5M11 13.500v2" fill="#9cdcf8" stroke="#1a90d0" /></>, true)}
          {tool(["Script", 26], ["Ext", 14], <><circle cx="6.500" cy="4" r="3.800" fill="#666" /><path d="M0 15V9.500l3-1.500h6v7z" fill="#666" /><path d="M7 7h9v9H7z" fill="#1a90d8" /><path d="M8.500 9.500h6M8.500 11.500h6M8.500 13.500h4" stroke="#fff" /></>, true)}
        </div>
      </div>
      {[["Parent:", 'Window("TtcRecordWnd", "", 1)', 158, "mt-[9px]"], ["Object:", 'Window("ATL:00000032200A4BB0", "Stop", 8)', 228, "mt-[3px]"]].map(([l, t, tw, mt]) => (
        <div key={l} className={`flex h-[17px] shrink-0 items-center ${mt}`}>
          <div className="w-[63px] pr-[8px] text-right text-[12.500px] font-bold text-[#333]"><T w={45}>{l}</T></div>
          <div className="flex h-full w-[410px] items-center bg-white pl-[2px] font-['Liberation_Sans',sans-serif] text-[12px] text-black"><T w={tw}>{t}</T></div>
        </div>
      ))}
    </div>
  );
}

export default function App() {
  return (
    <div className="relative flex h-[1032px] w-[1920px] flex-col overflow-hidden bg-[#545454] font-['Open_Sans','Noto_Sans',sans-serif] text-[11.500px] leading-4">
      <div className="flex h-[23px] shrink-0 items-center bg-[linear-gradient(90deg,#e2f6fa,#e4f7f4_18%,#f2f7e4_32%,#e6f8ee_42%,#e4f5fa_62%,#e9f6f8)] pl-[3px] text-black">
        <svg viewBox="0 0 16 16" className="size-4"><rect width="16" height="16" rx="1" fill="#2c3440" /><rect x="2" y="2" width="12" height="12" fill="#8fa0b8" /><path d="M4 13L9 2l3 11M5.500 9.500h6" fill="none" stroke="#2060e0" strokeWidth="2.200" /><path d="M5 12L9 3" stroke="#fff" strokeWidth=".8" /></svg>
        <T w={799} className="ml-[5px] text-[12px]">AutoSPRINK® 2023 Platinum - C:\Users\B.Chambers\Desktop\AutomationTesting\SmokeTesting\SPRINK Smoke Testing Files\P2S - 5.cad - [P2S - 5.cad]</T>
        <div className="ml-auto flex items-center gap-[35px] pr-5">
          <svg viewBox="0 0 10 10" className="size-2.5"><path d="M0 5.500h10" stroke="#111" /></svg>
          <svg viewBox="0 0 10 10" className="size-2.5"><path d="M.5 2.500h7v7h-7zM2.500 2V.5h7v7H8" fill="none" stroke="#111" /></svg>
          <svg viewBox="0 0 10 10" className="size-2.5"><path d="M0 0l10 10M10 0L0 10" stroke="#111" /></svg>
        </div>
      </div>
      <div className="flex h-[23px] shrink-0 items-center pl-[3px] text-white">
        <svg viewBox="0 0 16 16" className="mr-[10px] size-4" shapeRendering="crispEdges"><rect x="1" y="1" width="14" height="14" fill="#fff" stroke="#000" /><rect x="0" y="1" width="12" height="4" fill="#ffff40" stroke="#000" /><path d="M1 6l8 8H1z" fill="#00d020" /><path d="M13 5l-5 6" stroke="#808" /></svg>
        <div className="flex gap-[15.200px]">{menus.map(([t, tw]) => <T key={t} w={tw}>{t}</T>)}</div>
        <div className="ml-auto flex items-center gap-2 pt-[5px] pr-[5px]">
          <svg viewBox="0 0 8 8" className="size-2"><path d="M0 7h7" stroke="#a8b4c4" strokeWidth="2" /></svg>
          <svg viewBox="0 0 9 8" className="h-2 w-[9px]"><path d="M.5 3h6v4.500h-6zM2 2.500V.8h6.500v4.700H7" fill="none" stroke="#a8b4c4" /></svg>
          <svg viewBox="0 0 8 8" className="size-2"><path d="M0 0l8 8M8 0L0 8" stroke="#a8b4c4" strokeWidth="2" /></svg>
        </div>
      </div>
      <TopBars />
      <div className="flex h-[783px] shrink-0">
        <LayersPanel />
        <DocPanel />
        <Sidebar />
      </div>
      <StatusBar />
      <BottomBar />
      <Recorder />
    </div>
  );
}
